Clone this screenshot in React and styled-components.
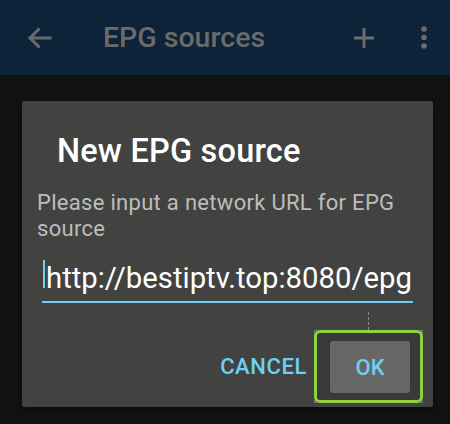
import React from "react";
import styled, { createGlobalStyle } from "styled-components";

const Global = createGlobalStyle`
  html, body { margin: 0; padding: 0; background: #111311; }
  body { font-family: Roboto, "Noto Sans", "Liberation Sans", sans-serif; }
  * { box-sizing: border-box; }
`;

const Screen = styled.div`
  width: 450px;
  height: 424px;
  background: #111311;
  overflow: hidden;
`;

const AppBar = styled.header`
  height: 75px;
  background: #0c2339;
  display: flex;
  align-items: center;
  padding-left: 26px;
  padding-right: 22px;
  color: #6b6b6b;
`;

const BarTitle = styled.h1`
  margin: 0 0 0 51px;
  font-size: 28.5px;
  font-weight: 500;
  line-height: 34px;
  color: #6b6b6b;
  flex: 1;
`;

const IconSlot = styled.span`
  display: inline-flex;
  width: ${(p) => p.$w}px;
  height: 28px;
  margin-left: ${(p) => p.$ml || 0}px;
  align-items: center;
  justify-content: center;
`;

const Dialog = styled.section`
  margin: 26px 0 0 22px;
  width: 411px;
  height: 306px;
  background: #424341;
  border-radius: 2px;
  box-shadow: 0 2px 10px rgba(0, 0, 0, 0.5);
  display: flex;
  flex-direction: column;
  padding: 30px 20px 4px 15px;
`;

const DialogTitle = styled.h2`
  margin: 0 0 0 20px;
  font-size: 32.5px;
  font-weight: 500;
  line-height: 40px;
  letter-spacing: 0.2px;
  color: #ffffff;
`;

const Message = styled.p`
  margin: 19px 0 0 0;
  font-size: 22px;
  line-height: 26px;
  letter-spacing: 0.3px;
  color: #bdbdbd;
  font-weight: 400;
`;

const Field = styled.div`
  margin: 18px 0 0 5px;
  height: 43px;
  display: flex;
  align-items: flex-start;
  border-bottom: 2px solid #6dcff6;
  overflow: hidden;
  white-space: nowrap;
`;

const Caret = styled.span`
  flex: none;
  width: 2px;
  height: 30px;
  margin-top: -2px;
  margin-left: 1px;
  margin-right: 1px;
  background: #6dcff6;
`;

const FieldText = styled.span`
  font-size: 29.3px;
  line-height: 36px;
  color: #ffffff;
  font-weight: 400;
`;

const Actions = styled.div`
  margin-top: 27px;
  margin-right: -10px;
  display: flex;
  justify-content: flex-end;
  align-items: center;
`;

const TextButton = styled.button`
  border: none;
  background: transparent;
  padding: 0;
  margin-right: 7px;
  font-family: inherit;
  font-size: 22px;
  font-weight: 500;
  color: #6dcff6;
  line-height: 26px;
  letter-spacing: 0.6px;
`;

const FocusFrame = styled.div`
  position: relative;
  border: 1px dashed #7b7b7b;
`;

const FocusGuide = styled.span`
  position: absolute;
  left: 53px;
  top: -19px;
  height: 18px;
  border-left: 1px dashed #8a8a8a;
`;

const FocusRing = styled.div`
  margin: -1px;
  width: 109px;
  height: 73px;
  border: 3px solid #8ed33a;
  border-radius: 6px;
  background: #393a38;
  padding: 8px 10px 7px 13px;
`;

const OkButton = styled.button`
  width: 80px;
  height: 52px;
  border: none;
  border-radius: 3px;
  background: #676866;
  font-family: inherit;
  font-size: 22px;
  font-weight: 500;
  color: #6dcff6;
  padding: 0;
`;

export default function App() {
  return (
    <>
      <Global />
      <Screen>
        <AppBar>
          <IconSlot $w={26}>
            <svg width="26" height="26" viewBox="0 0 26 26" fill="none" stroke="#6b6b6b" strokeWidth="3" strokeLinecap="square">
              <path d="M24 13H4M12.5 4.5L4 13l8.5 8.5" />
            </svg>
          </IconSlot>
          <BarTitle>EPG sources</BarTitle>
          <IconSlot $w={22}>
            <svg width="22" height="22" viewBox="0 0 22 22" fill="none" stroke="#6b6b6b" strokeWidth="3">
              <path d="M1 11h20M11 1v20" />
            </svg>
          </IconSlot>
          <IconSlot $w={8} $ml={45}>
            <svg width="8" height="26" viewBox="0 0 8 26" fill="#6b6b6b">
              <circle cx="4" cy="4" r="2.8" />
              <circle cx="4" cy="12.5" r="2.8" />
              <circle cx="4" cy="21" r="2.8" />
            </svg>
          </IconSlot>
        </AppBar>
        <Dialog>
          <DialogTitle>New EPG source</DialogTitle>
          <Message>Please input a network URL for EPG source</Message>
          <Field>
            <Caret />
            <FieldText>http://bestiptv.top:8080/epg.xml.gz</FieldText>
          </Field>
          <Actions>
            <TextButton>CANCEL</TextButton>
            <FocusFrame>
              <FocusGuide />
              <FocusRing>
                <OkButton>OK</OkButton>
              </FocusRing>
            </FocusFrame>
          </Actions>
        </Dialog>
      </Screen>
    </>
  );
}
